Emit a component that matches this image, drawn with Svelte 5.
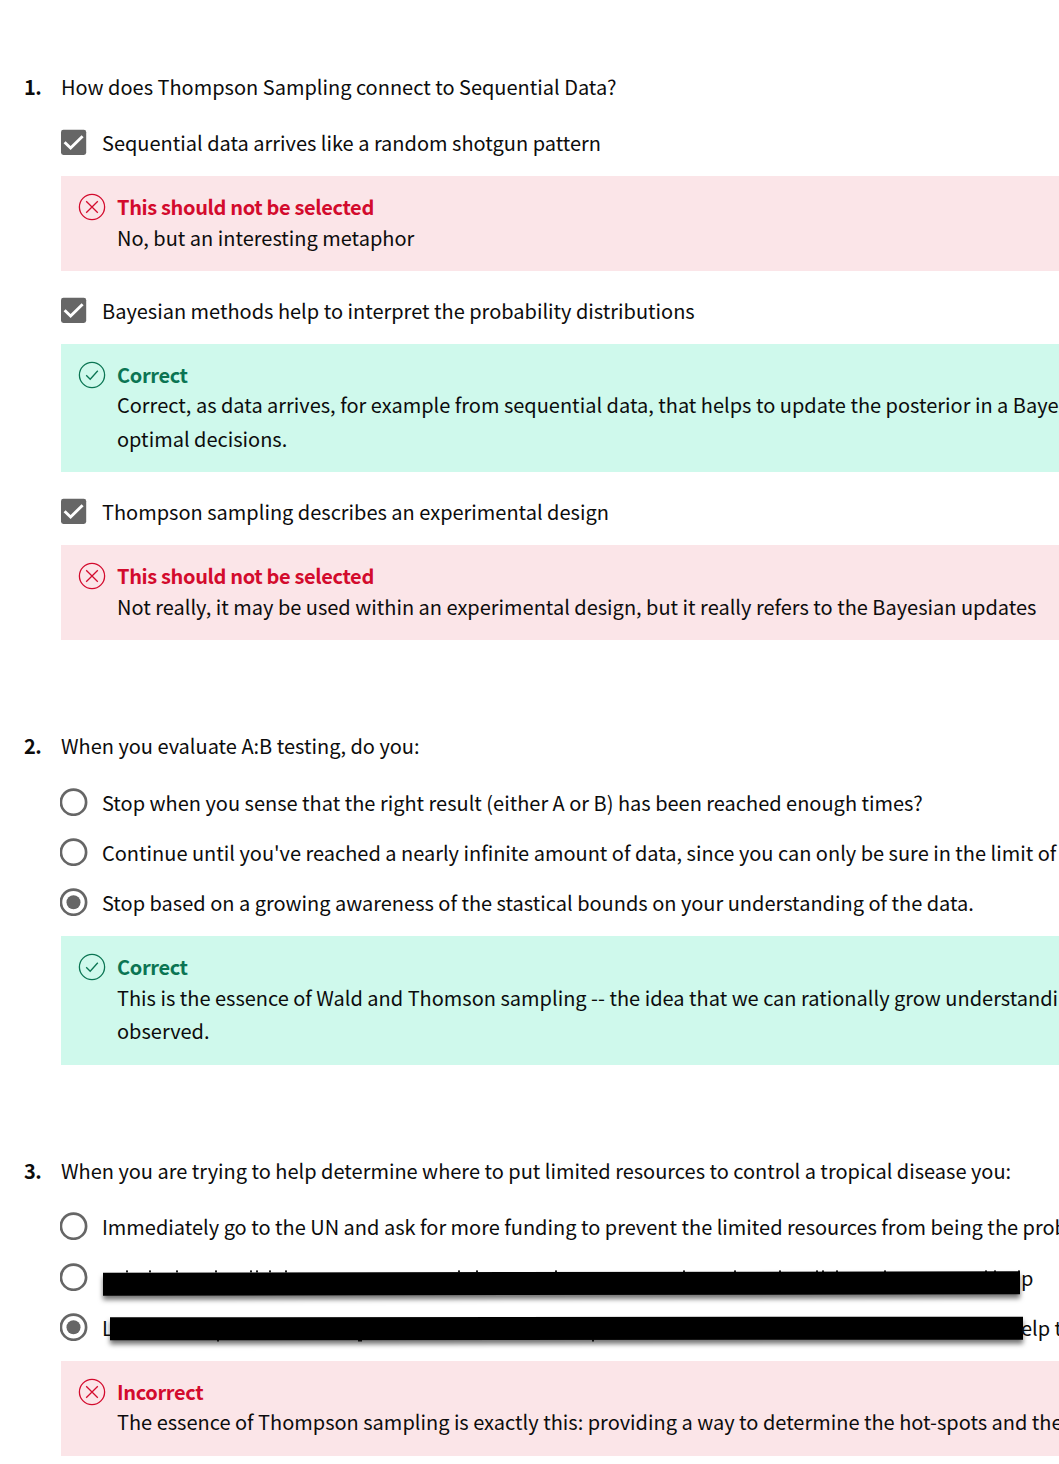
<script lang="ts">
  type Feedback = { ok: boolean; title: string; lines: string[]; raised?: boolean };
  type Option = { text: string; tail?: string; bar?: string; checked?: boolean; feedback?: Feedback };
  type Question = { kind: 'checkbox' | 'radio'; text: string; options: Option[] };

  const questions: Question[] = [
    {
      kind: 'checkbox',
      text: 'How does Thompson Sampling connect to Sequential Data?',
      options: [
        {
          text: 'Sequential data arrives like a random shotgun pattern',
          checked: true,
          feedback: { ok: false, title: 'This should not be selected', lines: ['No, but an interesting metaphor'] }
        },
        {
          text: 'Bayesian methods help to interpret the probability distributions',
          checked: true,
          feedback: {
            ok: true,
            raised: true,
            title: 'Correct',
            lines: [
              'Correct, as data arrives, for example from sequential data, that helps to update the posterior in a Bayesian',
              'optimal decisions.'
            ]
          }
        },
        {
          text: 'Thompson sampling describes an experimental design',
          checked: true,
          feedback: {
            ok: false,
            title: 'This should not be selected',
            lines: ['Not really, it may be used within an experimental design, but it really refers to the Bayesian updates']
          }
        }
      ]
    },
    {
      kind: 'radio',
      text: 'When you evaluate A:B testing, do you:',
      options: [
        { text: 'Stop when you sense that the right result (either A or B) has been reached enough times?' },
        { text: "Continue until you've reached a nearly infinite amount of data, since you can only be sure in the limit of" },
        {
          text: 'Stop based on a growing awareness of the stastical bounds on your understanding of the data.',
          checked: true,
          feedback: {
            ok: true,
            title: 'Correct',
            lines: [
              'This is the essence of Wald and Thomson sampling -- the idea that we can rationally grow understanding',
              'observed.'
            ]
          }
        }
      ]
    },
    {
      kind: 'radio',
      text: 'When you are trying to help determine where to put limited resources to control a tropical disease you:',
      options: [
        { text: 'Immediately go to the UN and ask for more funding to prevent the limited resources from being the problem' },
        { text: '', tail: 'p', bar: 'first' },
        {
          text: 'L',
          tail: 'elp t',
          bar: 'second',
          checked: true,
          feedback: {
            ok: false,
            raised: true,
            title: 'Incorrect',
            lines: ['The essence of Thompson sampling is exactly this: providing a way to determine the hot-spots and the']
          }
        }
      ]
    }
  ];

  // Letter tips that stick out past the edge of each redaction bar, relative to the option row.
  const tips: Record<string, { y: number; xs: number[] }> = {
    first: {
      y: 9.4,
      xs: [65, 88, 115, 154, 189, 195, 208, 224, 397, 415, 494, 622, 673, 718, 755, 761, 775, 823, 924, 933, 957]
    },
    second: { y: 28.5, xs: [156, 297, 299, 531] }
  };
</script>

<main>
  {#each questions as q, n}
    <section class="q{n + 1}">
      <span class="num">{n + 1}.</span>
      <div class="body">
        <p class="prompt">{q.text}</p>
        {#each q.options as o}
          <div class="option {q.kind} {o.bar ?? ''}">
            {#if q.kind === 'checkbox'}
              <svg class="control" width="28" height="28" viewBox="0 0 28 28">
                <rect x="1" y="1.8" width="25.2" height="25.2" rx="2.4" fill="#666" />
                <path d="M4.6 14.2 10.6 20 22.6 8.2" fill="none" stroke="#fff" stroke-width="2.9" />
              </svg>
            {:else}
              <svg class="control" width="28" height="28" viewBox="0 0 28 28">
                <circle cx="13.5" cy="14.2" r="12.6" fill="none" stroke="#666" stroke-width="2.7" />
                {#if o.checked}<circle cx="13.5" cy="14.2" r="7" fill="#666" />{/if}
              </svg>
            {/if}
            <span class="label">{o.text}</span>
            {#if o.bar}
              <svg class="tips" width="998" height="33" viewBox="0 0 998 33">
                {#each tips[o.bar].xs as x}<rect {x} y={tips[o.bar].y} width="2" height="2" fill="#222" />{/each}
              </svg>
              <span class="redaction {o.bar}"></span>
              <span class="tail">{o.tail}</span>
            {/if}
          </div>
          {#if o.feedback}
            <div class="feedback" class:ok={o.feedback.ok} class:raised={o.feedback.raised}>
              <svg class="mark" width="28" height="28" viewBox="0 0 28 28" fill="none" stroke="currentColor" stroke-width="1.3">
                <circle cx="14" cy="14" r="12.6" />
                {#if o.feedback.ok}
                  <path d="M8.2 14.2 12.2 18.2 19.8 9.7" />
                {:else}
                  <path d="M8.2 8.2 19.8 19.8M19.8 8.2 8.2 19.8" />
                {/if}
              </svg>
              <div class="copy">
                <strong>{o.feedback.title}</strong>
                {#each o.feedback.lines as line}<p>{line}</p>{/each}
              </div>
            </div>
          {/if}
        {/each}
      </div>
    </section>
  {/each}
</main>

<style>
  :global(body) { background: #fff; }
  main {
    width: 1059px;
    height: 1464px;
    overflow: hidden;
    box-sizing: border-box;
    padding-top: 70px;
    font-family: 'Noto Sans CJK JP', 'Noto Sans', sans-serif;
    font-size: 19.99px;
    line-height: 33px;
    color: #0c0c0c;
    white-space: nowrap;
  }
  p { margin: 0; }
  section { display: flex; padding-left: 24px; }
  .q1 { height: 659px; }
  .q2 { height: 425px; }
  .num { width: 37px; flex: none; font-weight: 700; letter-spacing: -0.5px; }
  .body { width: 998px; flex: none; }
  .option { display: flex; align-items: center; height: 33px; position: relative; }
  .checkbox { margin: 23px 0 17px; }
  .radio { margin: 17px 0; }
  .prompt + .radio { margin-top: 24px; }
  .q3 .prompt + .radio { margin-top: 23px; }
  .option.first { margin-top: 18px; }
  .control { flex: none; margin: 0 14px 2px -1px; }
  .tips { position: absolute; left: 0; top: 0; }
  .redaction { position: absolute; height: 23.4px; background: #000; box-shadow: 0 4px 5px rgba(0, 0, 0, 0.55); }
  .redaction.first { left: 42px; top: 10.8px; width: 917px; transform: rotate(-0.1deg); }
  .redaction.second { left: 49px; top: 5.5px; width: 913px; transform: rotate(-0.045deg); }
  .tail { position: absolute; left: 960px; }
  .feedback { display: flex; padding: 17px 0 17px 17px; background: #fbe5e8; color: #d30b2d; }
  .feedback.ok { background: #cff9ec; color: #0b7553; }
  .q2 .feedback { padding-bottom: 18px; }
  .mark { flex: none; margin-right: 11px; }
  .copy strong { display: block; height: 28px; line-height: 28px; font-weight: 700; letter-spacing: -0.35px; }
  .copy p { color: #0c0c0c; }
  .raised strong + p { margin: -1px 0 1px; }
</style>
